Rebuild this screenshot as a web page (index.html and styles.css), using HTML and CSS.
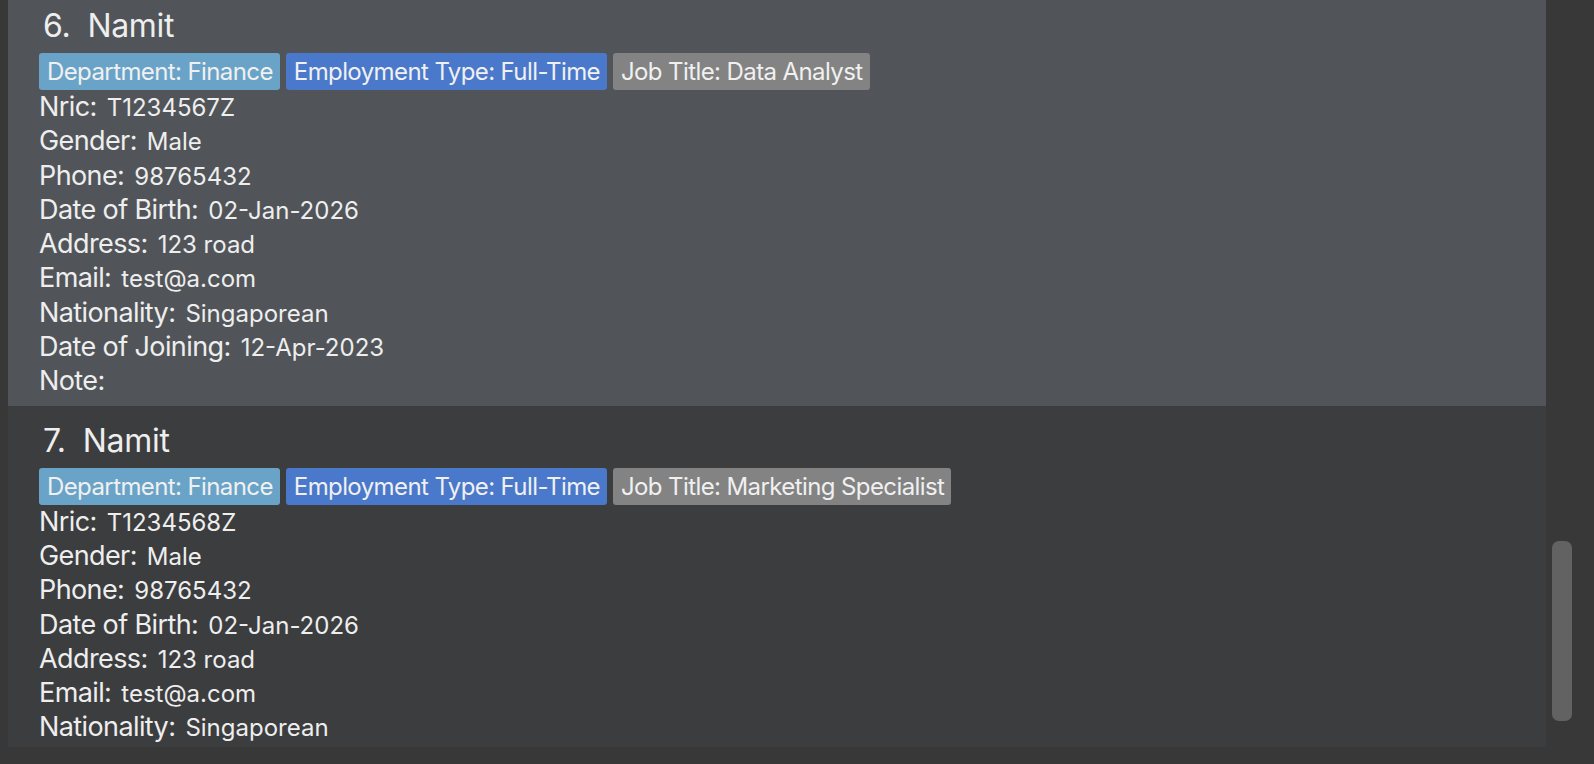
FILE: index.html
```html
<!DOCTYPE html>
<html>
<head>
<meta charset="utf-8">
<link rel="stylesheet" href="styles.css">
</head>
<body>
<div class="app">
  <div class="list">
    <div class="cards">
      <div class="card card-selected">
        <div class="title"><span class="idx">6.</span><span class="name">Namit</span></div>
        <div class="tags">
          <span class="tag tag-dept">Department: Finance</span>
          <span class="tag tag-emp">Employment Type: Full-Time</span>
          <span class="tag tag-job">Job Title: Data Analyst</span>
        </div>
        <div class="row"><span class="label">Nric:</span><span class="value">T1234567Z</span></div>
        <div class="row"><span class="label">Gender:</span><span class="value">Male</span></div>
        <div class="row"><span class="label">Phone:</span><span class="value">98765432</span></div>
        <div class="row"><span class="label">Date of Birth:</span><span class="value">02-Jan-2026</span></div>
        <div class="row"><span class="label">Address:</span><span class="value">123 road</span></div>
        <div class="row"><span class="label">Email:</span><span class="value">test@a.com</span></div>
        <div class="row"><span class="label">Nationality:</span><span class="value">Singaporean</span></div>
        <div class="row"><span class="label">Date of Joining:</span><span class="value">12-Apr-2023</span></div>
        <div class="row"><span class="label">Note:</span><span class="value"></span></div>
      </div>
      <div class="card">
        <div class="title"><span class="idx">7.</span><span class="name">Namit</span></div>
        <div class="tags">
          <span class="tag tag-dept">Department: Finance</span>
          <span class="tag tag-emp">Employment Type: Full-Time</span>
          <span class="tag tag-job">Job Title: Marketing Specialist</span>
        </div>
        <div class="row"><span class="label">Nric:</span><span class="value">T1234568Z</span></div>
        <div class="row"><span class="label">Gender:</span><span class="value">Male</span></div>
        <div class="row"><span class="label">Phone:</span><span class="value">98765432</span></div>
        <div class="row"><span class="label">Date of Birth:</span><span class="value">02-Jan-2026</span></div>
        <div class="row"><span class="label">Address:</span><span class="value">123 road</span></div>
        <div class="row"><span class="label">Email:</span><span class="value">test@a.com</span></div>
        <div class="row"><span class="label">Nationality:</span><span class="value">Singaporean</span></div>
        <div class="row"><span class="label">Date of Joining:</span><span class="value">12-Apr-2023</span></div>
        <div class="row"><span class="label">Note:</span><span class="value"></span></div>
      </div>
    </div>
  </div>
  <div class="scrollbar">
    <div class="thumb"></div>
  </div>
</div>
</body>
</html>
```
FILE: styles.css
```css
html, body {
  margin: 0;
  padding: 0;
}
body {
  background: #383838;
  font-family: Inter, "Open Sans", sans-serif;
  color: #eeeeee;
  width: 1594px;
  height: 764px;
  overflow: hidden;
}
.app {
  display: flex;
  height: 764px;
}
.list {
  margin-left: 8px;
  width: 1538px;
  height: 747px;
  overflow: hidden;
  background: #3c3d3f;
}
.cards {
  margin-top: -9px;
}
.card {
  padding: 15px 0 7px 31px;
  background: #3c3d3f;
}
.card-selected {
  background: #515559;
}
.title {
  font-size: 32px;
  line-height: 40px;
  padding-left: 4px;
  letter-spacing: -0.3px;
}
.idx {
  margin-right: 17px;
}
.tags {
  display: flex;
  gap: 6px;
  margin-top: 7px;
}
.tag {
  font-size: 24px;
  line-height: 37px;
  height: 37px;
  padding: 0 7px 0 8px;
  border-radius: 3px;
  color: #f0f0f0;
  letter-spacing: -0.6px;
}
.tag-dept { background: #6aa3c8; }
.tag-emp { background: #4a78cb; }
.tag-job { background: #838383; }
.row {
  font-size: 27px;
  line-height: 34px;
  height: 34.3px;
}
.label {
  margin-right: 10px;
  letter-spacing: -0.6px;
}
.value {
  font-size: 24px;
  line-height: 24px;
  letter-spacing: 0;
}
.scrollbar {
  width: 48px;
  display: flex;
  flex-direction: column;
  padding-top: 541px;
  box-sizing: border-box;
}
.thumb {
  margin-left: 6px;
  width: 20px;
  height: 180px;
  border-radius: 7px;
  background: #626262;
}
```
